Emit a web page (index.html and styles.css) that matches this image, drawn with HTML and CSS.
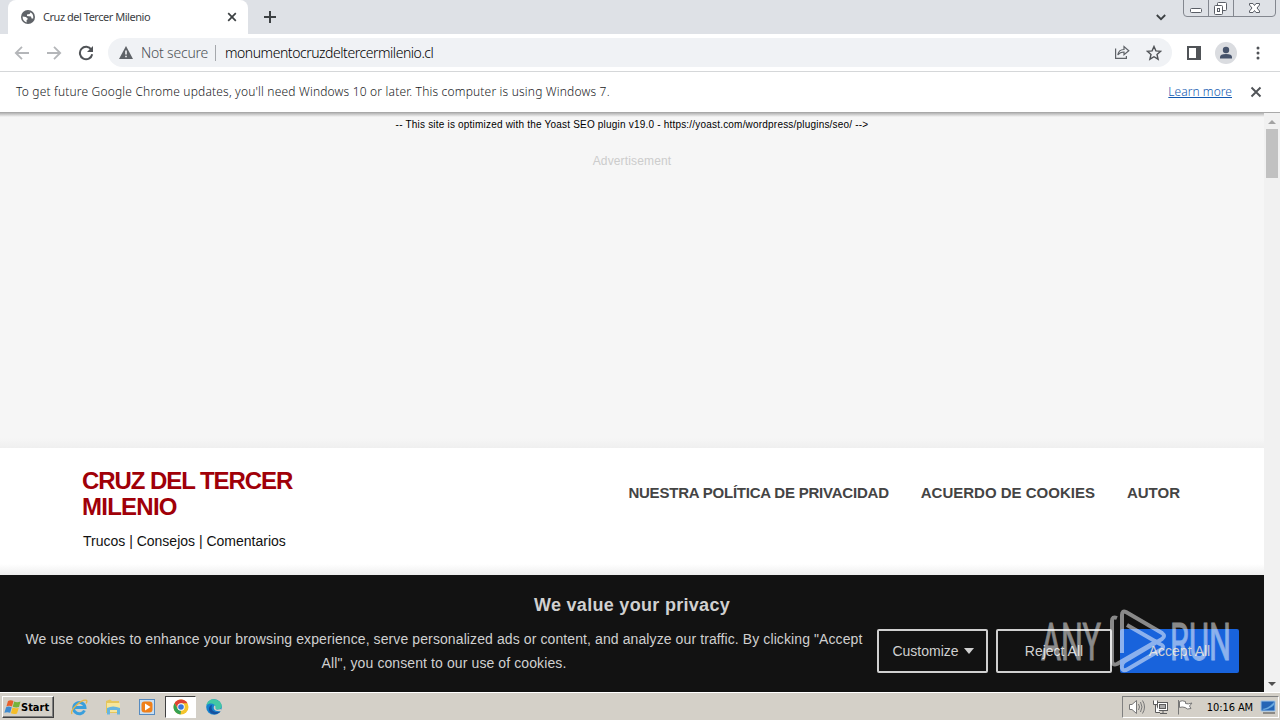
FILE: index.html
```html
<!DOCTYPE html>
<html lang="es">
<head>
    <meta charset="utf-8">
    <title>Cruz del Tercer Milenio</title>
    <link rel="stylesheet" href="styles.css">
</head>
<body>
    <div class="tabbar">
        <div class="tab">
            <svg class="globe" width="16" height="16" viewBox="0 0 16 16">
                <circle cx="8" cy="8" r="7" fill="#5f6368"/>
                <path d="M2.6 7.5 L6 8 L8 10 L6.6 11 L6.6 13.4 C4 12.6 2.4 10.4 2.6 7.5Z M7.5 2.6 L10.6 3.2 L9.6 5 L7 5.4 L7 7 L11 7.4 L11.6 9.6 L13.2 9.6 C13.8 6 12 3 7.5 2.6Z" fill="#fff"/>
            </svg>
            <span class="tab-title">Cruz del Tercer Milenio</span>
            <svg width="10" height="10" viewBox="0 0 10 10"><path d="M1.2 1.2 L8.8 8.8 M8.8 1.2 L1.2 8.8" stroke="#3c4043" stroke-width="1.7"/></svg>
        </div>
        <svg class="plus" width="12" height="12" viewBox="0 0 12 12"><path d="M6 0 V12 M0 6 H12" stroke="#3c4043" stroke-width="2"/></svg>
        <svg class="chevron" width="10" height="7" viewBox="0 0 10 7"><path d="M.8 1 L5 5.2 L9.2 1" fill="none" stroke="#3c4043" stroke-width="1.8"/></svg>
        <svg class="window-buttons" width="94" height="18" viewBox="0 0 94 18">
            <path d="M.5 0 V13 Q.5 16.5 4 16.5 H89 Q92.5 16.5 92.5 13 V0 M25.5 0 V16 M50.5 0 V16" fill="none" stroke="#83878f"/>
            <g fill="#fff" stroke="#5a5e66">
                <rect x="7.500" y="8.500" width="11" height="4" rx="1"/>
                <rect x="34.500" y="2.500" width="9" height="8" rx="1"/>
                <rect x="31.500" y="5.500" width="8" height="9" rx="1"/>
                <rect x="34.500" y="8.500" width="2" height="3"/>
                <path d="M66.500 3.500 H70 L71.500 5.500 L73 3.500 H76.500 V5 L74 8 L76.500 11 V12.500 H73 L71.500 10.500 L70 12.500 H66.500 V11 L69 8 L66.500 5Z"/>
            </g>
        </svg>
    </div>

    <div class="toolbar">
        <svg class="nav-icon" width="16" height="16" viewBox="0 0 16 16"><path d="M15 8 H2 M8 1.800 L1.800 8 L8 14.200" fill="none" stroke="#b4b6b9" stroke-width="1.800"/></svg>
        <svg class="nav-icon" width="16" height="16" viewBox="0 0 16 16"><path d="M1 8 H14 M8 1.800 L14.200 8 L8 14.200" fill="none" stroke="#b4b6b9" stroke-width="1.800"/></svg>
        <svg class="nav-icon" width="16" height="16" viewBox="0 0 16 16"><path d="M13.300 4.600 A6.200 6.200 0 1 0 14.200 9.200" fill="none" stroke="#505357" stroke-width="2"/><path d="M15 1 V7 H9Z" fill="#505357"/></svg>
        <div class="omnibox">
            <svg width="14" height="13" viewBox="0 0 14 13"><path d="M7 0 L14 13 H0Z" fill="#5f6368"/><path d="M7 4.500 V8.500 M7 9.700 V11.200" stroke="#fff" stroke-width="1.500"/></svg>
            <span class="not-secure">Not secure</span>
            <span class="divider"></span>
            <span class="url">monumentocruzdeltercermilenio.cl</span>
            <svg class="share" width="16" height="15" viewBox="0 0 16 15" fill="none" stroke="#5f6368" stroke-width="1.200"><path d="M1.600 3.500 V13.400 H12.400 V11"/><path d="M3.800 10 C4.300 6.500 6.500 4.600 10 4.500 V1.500 L14.800 5.700 L10 9.800 V7 C7 7 5.300 8 3.800 10Z"/></svg>
            <svg width="16" height="16" viewBox="0 0 16 16"><path d="M8 1.500 L9.900 5.900 L14.700 6.300 L11 9.500 L12.100 14.200 L8 11.700 L3.900 14.200 L5 9.500 L1.300 6.300 L6.100 5.900Z" fill="none" stroke="#505357" stroke-width="1.400"/></svg>
        </div>
        <svg class="panel" width="14" height="14" viewBox="0 0 14 14"><path d="M1 1 H13 V13 H1Z" fill="none" stroke="#505357" stroke-width="2"/><path d="M9 0 H14 V14 H9Z" fill="#505357"/></svg>
        <svg class="avatar" width="22" height="22" viewBox="0 0 22 22"><circle cx="11" cy="11" r="11" fill="#dadce0"/><circle cx="11" cy="8" r="3.200" fill="#46536b"/><path d="M5 16.500 V15 Q5 12 11 12 Q17 12 17 15 V16.500Z" fill="#46536b"/></svg>
        <svg class="dots" width="4" height="14" viewBox="0 0 4 14" fill="#505357"><circle cx="2" cy="2" r="1.500"/><circle cx="2" cy="7" r="1.500"/><circle cx="2" cy="12" r="1.500"/></svg>
    </div>

    <div class="infobar">
        <span class="info-text">To get future Google Chrome updates, you'll need Windows 10 or later. This computer is using Windows 7.</span>
        <a class="learn">Learn more</a>
        <svg width="12" height="12" viewBox="0 0 12 12"><path d="M1.500 1.500 L10.500 10.500 M10.500 1.500 L1.500 10.500" stroke="#505357" stroke-width="1.900"/></svg>
    </div>

    <div class="viewport">
        <div class="page">
            <div class="ad">
                <p class="yoast">-- This site is optimized with the Yoast SEO plugin v19.0 - https://yoast.com/wordpress/plugins/seo/ --&gt;</p>
                <p class="ad-label">Advertisement</p>
            </div>
            <header class="site-header">
                <div class="brand">
                    <h1><span class="line1">CRUZ DEL TERCER</span><br><span class="line2">MILENIO</span></h1>
                    <p>Trucos | Consejos | Comentarios</p>
                </div>
                <nav>
                    <a class="nav-privacy">NUESTRA POLÍTICA DE PRIVACIDAD</a>
                    <a>ACUERDO DE COOKIES</a>
                    <a>AUTOR</a>
                </nav>
            </header>
            <section class="cookies">
                <h2>We value your privacy</h2>
                <div class="cookie-row">
                    <p>We use cookies to enhance your browsing experience, serve personalized ads or content, and analyze our traffic. By clicking "Accept<br>All", you consent to our use of cookies.</p>
                    <button class="customize">Customize <i></i></button>
                    <button class="reject">Reject All</button>
                    <button class="accept">Accept All</button>
                </div>
                <svg class="watermark" width="200" height="70" viewBox="0 0 200 70">
                    <g class="logo-text">
                        <text x="4" y="53" textLength="60" lengthAdjust="spacingAndGlyphs">ANY</text>
                        <text x="133" y="53" textLength="61" lengthAdjust="spacingAndGlyphs">RUN</text>
                    </g>
                    <g fill="none" stroke="#fff" stroke-width="4" stroke-linejoin="round">
                        <path d="M80 11 Q75 9 75 14 V53 Q75 59 80 57 L120 34"/>
                        <path d="M85 46 V8 Q85 3 89 5 L125 26 Q129 29 125 32 L88 54 Q84 57 85 61 Q86 65 91 62 L125 42 Q128 39 123 37 L90 18"/>
                    </g>
                </svg>
            </section>
        </div>
        <div class="scrollbar">
            <i class="arrow-up"></i>
            <div class="thumb"></div>
            <i class="arrow-down"></i>
        </div>
    </div>

    <div class="taskbar">
        <div class="start">
            <svg width="17" height="16" viewBox="0 0 17 16"><path d="M4 2 Q6.500 .5 9.500 2 L8 7.500 Q5 6 2.400 7.500Z" fill="#e8602c"/><path d="M10.200 2.500 Q13 4 16.500 2.500 L15 8 Q12 9 8.700 7.800Z" fill="#76b33b"/><path d="M2.100 8.200 Q4.500 6.800 7.700 8.200 L6.200 13.800 Q3 12.500 .4 13.800Z" fill="#3f8bd0"/><path d="M8.500 8.600 Q11.500 10 14.800 8.800 L13 14.500 Q10 15.700 6.900 14.200Z" fill="#f5bd28"/></svg>
            <span>Start</span>
        </div>
        <div class="apps">
            <svg width="18" height="18" viewBox="0 0 18 18"><path d="M14.500 12.500 A5.700 5.700 0 1 1 15 9.500 H5" fill="none" stroke="#3a9fdc" stroke-width="2.900"/><path d="M2 16 C-.5 12 12 .5 16.500 2.300 Q17.500 3.300 16 5.500" fill="none" stroke="#e5b647" stroke-width="1.300"/></svg>
            <svg width="18" height="18" viewBox="0 0 18 18"><path d="M2 3 L6 1.500 L8 3 H15 V15 H2Z" fill="#e5c65c"/><path d="M3 5 H16 V14 H3Z" fill="#f6e69c"/><path d="M3 10 Q9 7 16 10 V16.500 H13 V12 H6 V16.500 H3Z" fill="#67b5df"/></svg>
            <svg width="18" height="18" viewBox="0 0 18 18"><rect x="1.500" y="1.500" width="15" height="15" fill="#c9dff2" stroke="#568bc0"/><rect x="3.500" y="3.500" width="11" height="11" rx="3" fill="#f08019"/><path d="M7 5.500 L12.500 9 L7 12.500Z" fill="#fff"/></svg>
            <div class="active-app">
                <svg width="16" height="16" viewBox="0 0 16 16"><circle cx="8" cy="8" r="7.500" fill="#f5c52c"/><path d="M1.500 4.250 A7.500 7.500 0 0 1 14.500 4.250 H8 L5 9.750Z" fill="#df4334"/><path d="M1.500 4.250 L4.800 9.900 L8 11.500 L7.500 15.500 A7.500 7.500 0 0 1 1.500 4.250Z" fill="#35a153"/><circle cx="8" cy="8" r="3.700" fill="#fff"/><circle cx="8" cy="8" r="2.800" fill="#3877dc"/></svg>
            </div>
            <svg width="18" height="18" viewBox="0 0 18 18"><circle cx="9" cy="9" r="7.800" fill="#1683cf"/><path d="M1.500 7 C3 1 9 0 13 2.500 C17 5 18 9 15 11 C12 12.500 9 11 10.500 9 C10.500 5.500 5 4 1.500 7Z" fill="#43c7a4"/><path d="M7 7 C5 13 10 15 15.500 13.500 C11 18.500 3 16 4 10 C4.500 8 5.500 7.200 7 7Z" fill="#15519f"/><path d="M9.300 7.500 C12 8 9 11 12 11.700 L16.500 11 L16 13 C10 14 7.500 11 9.300 7.500Z" fill="#d4d0c8"/></svg>
        </div>
        <div class="tray">
            <svg width="18" height="16" viewBox="0 0 18 16" fill="#fff" stroke="#777"><path d="M1.500 5.500 H4 L8.500 1.500 V14.500 L4 10.500 H1.500Z"/><path d="M10.500 5 Q12.500 8 10.500 11 M12.500 3 Q15.500 8 12.500 13 M14.500 1.500 Q18.500 8 14.500 14.500" fill="none"/></svg>
            <svg width="18" height="16" viewBox="0 0 18 16" fill="#fff" stroke="#5c5c5c"><rect x="5.500" y="3.500" width="10" height="8"/><rect x="7.500" y="5.500" width="6" height="4" fill="#aaa"/><path d="M8 14.500 H15 M11 12 V14 M1.500 1.500 V5.500 H5.500 V1.500 M3.500 5.500 V13.500 H8"/></svg>
            <svg width="18" height="16" viewBox="0 0 18 16" fill="#fff" stroke="#777"><path d="M2.500 1 V15.500 M3.500 2.500 Q6 1 9.500 2.500 V4.500 Q12 5.500 16 4 L13.500 7 L15 9.500 Q11 11 9 8.500 Q6 7.500 3.500 8.500Z"/></svg>
            <span class="clock">10:16 AM</span>
            <svg width="16" height="14" viewBox="0 0 16 14"><path d="M1 1 H15 V11 H1Z" fill="#2465b6" stroke="#9ec5e8"/><path d="M2 9 Q9 8 14 2 V5 Q10 9 4 10Z" fill="#69a9df"/><path d="M3 13 H15" stroke="#444"/></svg>
        </div>
    </div>
</body>
</html>
```
FILE: styles.css
```css
* {
    box-sizing: border-box;
}

body {
    margin: 0;
    width: 1280px;
    height: 720px;
    overflow: hidden;
    display: flex;
    flex-direction: column;
    font-family: "Noto Sans", "Open Sans", sans-serif;
}

svg {
    display: block;
    flex: none;
}

p, h1, h2 {
    margin: 0;
    font-weight: normal;
    white-space: nowrap;
}

.tabbar {
    display: flex;
    height: 34px;
    background: #dee1e6;
    padding-left: 8px;
}

.tab {
    display: flex;
    align-items: center;
    width: 240px;
    height: 34px;
    padding: 0 11px 0 12px;
    background: #fff;
    border-radius: 8px 8px 0 0;
}

.tab-title {
    flex: 1;
    margin-left: 7px;
    padding-bottom: 1px;
    font-size: 11px;
    letter-spacing: -0.47px;
    color: #3c4043;
}

.plus {
    margin: 11px 0 0 16px;
}

.chevron {
    margin: 14px 17px 0 auto;
}

.window-buttons {
    margin-right: 3px;
}

.toolbar {
    display: flex;
    align-items: center;
    height: 38px;
    padding: 0 20px 0 14px;
    background: #fff;
    border-bottom: 1px solid #d5d7d9;
}

.nav-icon {
    margin-right: 16px;
}

.omnibox {
    display: flex;
    align-items: center;
    width: 1064px;
    height: 29px;
    margin-left: -2px;
    padding: 0 10px 0 11px;
    border-radius: 15px;
    background: #f0f2f5;
    font-size: 14px;
    font-weight: 300;
    color: #4d5156;
}

.not-secure {
    width: 67px;
    margin-left: 8px;
    letter-spacing: -0.2px;
    white-space: nowrap;
}

.divider {
    width: 1px;
    height: 16px;
    margin: 0 9px 0 7px;
    background: #a5a8ac;
}

.url {
    color: #000;
    letter-spacing: -0.46px;
}

.share {
    margin: 0 16px 0 auto;
}

.panel {
    margin-left: 15px;
}

.avatar {
    margin-left: 14px;
}

.dots {
    margin-left: auto;
}

.infobar {
    display: flex;
    align-items: center;
    height: 40px;
    padding: 0 18px 0 16px;
    background: #fff;
    font-size: 12px;
    font-weight: 300;
    color: #202124;
    white-space: nowrap;
}

.info-text {
    padding-bottom: 2px;
    letter-spacing: 0.18px;
}

.learn {
    margin: 0 18px 0 auto;
    padding-bottom: 2px;
    letter-spacing: 0.05px;
    color: #1259b0;
    text-decoration: underline;
}

.viewport {
    display: flex;
    height: 580px;
    border-top: 1px solid #a9a9a9;
    background: linear-gradient(#b4b4b4, #f6f6f6 4px);
}

.page {
    width: 1264px;
    font-family: "Liberation Sans", Arial, sans-serif;
}

.ad {
    height: 335px;
    padding-top: 6px;
    text-align: center;
    background: linear-gradient(transparent 325px, #efefef);
}

.yoast {
    font-size: 10px;
    line-height: 12px;
    letter-spacing: 0.2px;
    color: #000;
}

.ad-label {
    margin-top: 22px;
    font-size: 12px;
    line-height: 16px;
    letter-spacing: 0.15px;
    color: #ccc;
}

.site-header {
    display: flex;
    height: 127px;
    padding: 20px 84px 0 82px;
    background: linear-gradient(#fff 116px, #eee);
}

.brand h1 {
    font-size: 24px;
    font-weight: bold;
    line-height: 26px;
    color: #a00008;
}

.line1 {
    letter-spacing: -1.07px;
}

.line2 {
    letter-spacing: -0.75px;
}

.brand p {
    margin-top: 13px;
    padding-left: 1px;
    font-size: 14px;
    line-height: 16px;
    color: #111;
}

nav {
    display: flex;
    gap: 32px;
    margin: 16px 0 0 auto;
    font-size: 15px;
    font-weight: bold;
    line-height: 18px;
    color: #444;
    white-space: nowrap;
}

.nav-privacy {
    letter-spacing: -0.22px;
}

.cookies {
    position: relative;
    height: 117px;
    padding: 19px 25px 0;
    background: #121212;
    color: #d0d0d0;
}

.cookies h2 {
    font-size: 18px;
    font-weight: bold;
    line-height: 22px;
    letter-spacing: 0.3px;
    text-align: center;
}

.cookie-row {
    display: flex;
    align-items: center;
    height: 48px;
    margin-top: 11px;
}

.cookie-row p {
    width: 838px;
    font-size: 14px;
    line-height: 24px;
    letter-spacing: 0.1px;
    text-align: center;
}

.cookie-row button {
    height: 44px;
    margin: 0 0 0 8px;
    padding: 0;
    border: 2px solid #d0d0d0;
    border-radius: 2px;
    background: transparent;
    font: 14px "Liberation Sans", Arial, sans-serif;
    color: #d0d0d0;
}

.cookie-row .customize {
    display: flex;
    align-items: center;
    justify-content: center;
    gap: 5px;
    width: 111px;
    margin-left: 14px;
    padding-left: 1px;
}

.customize i {
    border: 5px solid transparent;
    border-top: 6px solid #d0d0d0;
    border-bottom: 0;
}

.cookie-row .reject {
    width: 116px;
}

.cookie-row .accept {
    width: 119px;
    border-color: #1863dc;
    background: #1863dc;
}

/* logo drawn over the buttons */
.watermark {
    position: absolute;
    left: 1037px;
    top: 32px;
    overflow: visible;
    opacity: 0.5;
}

.logo-text {
    fill: #fff;
    stroke: #fff;
    stroke-width: 0.9px;
    font: 400 52px Roboto, sans-serif;
}

.scrollbar {
    display: flex;
    flex-direction: column;
    align-items: center;
    width: 16px;
    padding: 7px 0 6px;
    background: #f1f1f1;
}

.arrow-up {
    border: 4px solid transparent;
    border-top: 0;
    border-bottom: 4px solid #a3a3a3;
}

.thumb {
    width: 12px;
    height: 49px;
    margin-top: 5px;
    background: #c1c1c1;
}

.arrow-down {
    margin-top: auto;
    border: 4px solid transparent;
    border-bottom: 0;
    border-top: 4px solid #505050;
}

.taskbar {
    display: flex;
    align-items: center;
    height: 28px;
    padding: 1px 1px 0 2px;
    border-top: 1px solid #fff;
    background: #d4d0c8;
}

.start {
    display: flex;
    align-items: center;
    width: 52px;
    height: 22px;
    padding-left: 1px;
    border: 1px solid;
    border-color: #fff #404040 #404040 #fff;
    box-shadow: inset -1px -1px #808080;
    font: bold 11px "DejaVu Sans Condensed", sans-serif;
    color: #000;
}

.apps {
    display: flex;
    align-items: center;
    margin-left: 16px;
    gap: 16px;
}

.active-app {
    display: flex;
    align-items: center;
    justify-content: center;
    width: 31px;
    height: 22px;
    margin: 0 -7px 0 -7px;
    border: 1px solid;
    border-color: #404040 #fff #fff #404040;
    background: #fff;
}

.tray {
    display: flex;
    align-items: center;
    gap: 6px;
    width: 157px;
    height: 22px;
    margin-left: auto;
    padding: 0 2px 0 5px;
    border: 1px solid;
    border-color: #808080 #fff #fff #808080;
}

.clock {
    margin-left: auto;
    padding-right: 1px;
    font: 11px "DejaVu Sans Condensed", sans-serif;
    letter-spacing: -0.1px;
    color: #000;
    white-space: nowrap;
}
```
